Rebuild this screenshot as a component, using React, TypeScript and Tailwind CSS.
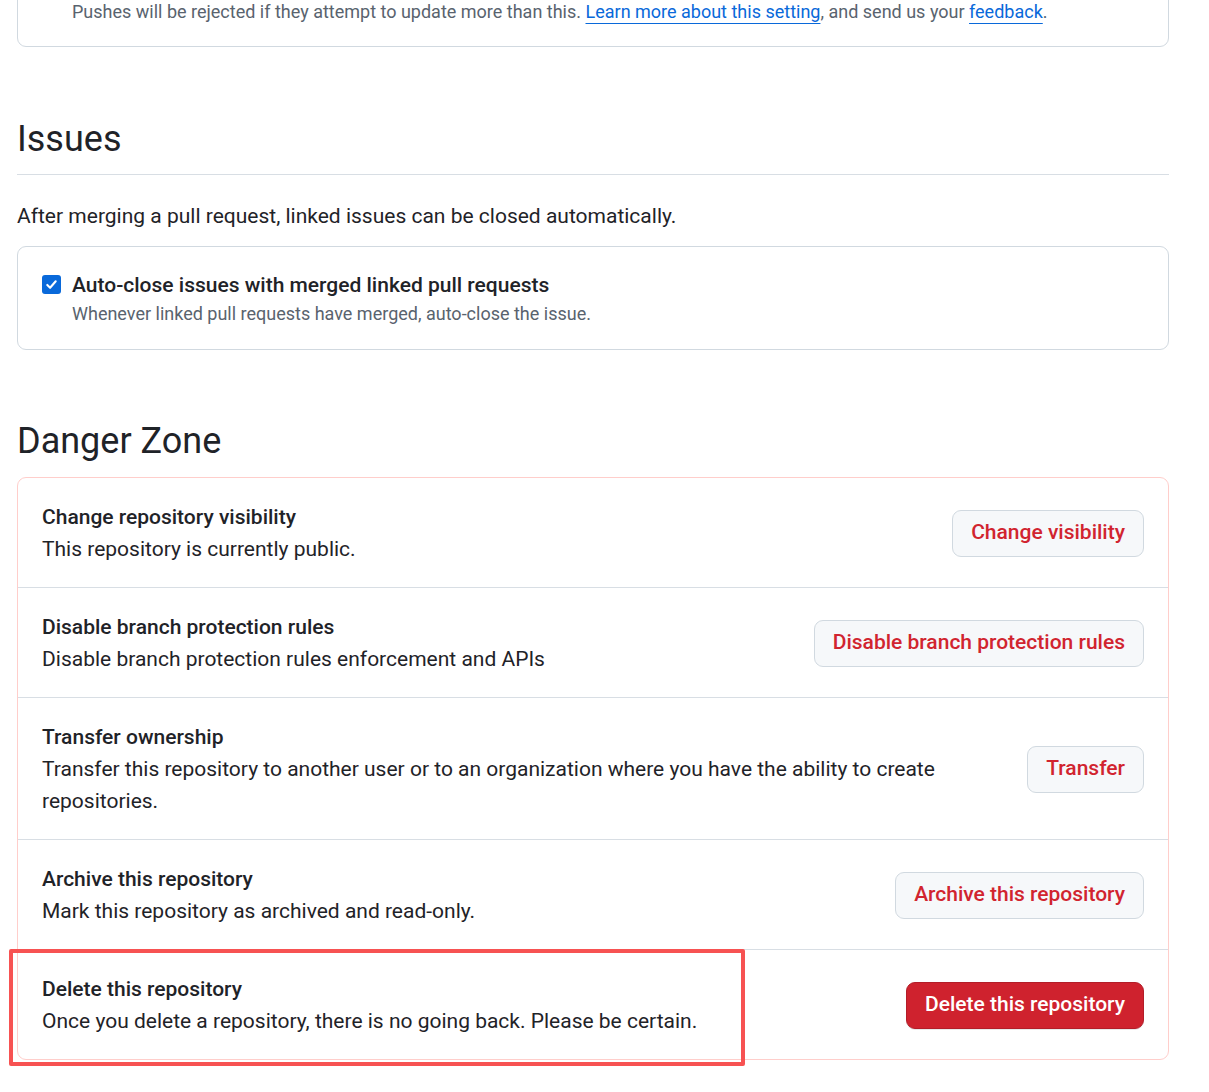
import React from "react";

type Row = { title: string; desc: string; action: string; primary?: boolean };

const rows: Row[] = [
  { title: "Change repository visibility", desc: "This repository is currently public.", action: "Change visibility" },
  { title: "Disable branch protection rules", desc: "Disable branch protection rules enforcement and APIs", action: "Disable branch protection rules" },
  {
    title: "Transfer ownership",
    desc: "Transfer this repository to another user or to an organization where you have the ability to create repositories.",
    action: "Transfer",
  },
  { title: "Archive this repository", desc: "Mark this repository as archived and read-only.", action: "Archive this repository" },
  { title: "Delete this repository", desc: "Once you delete a repository, there is no going back. Please be certain.", action: "Delete this repository", primary: true },
];

export default function App() {
  return (
    <div className="relative w-[1209px] h-[1092px] overflow-hidden bg-white text-[#1f2328] font-['Roboto',sans-serif]">
      <div className="ml-[17px] w-[1152px]">
        {/* top box (cut off) */}
        <div className="-mt-[40px] rounded-[9px] border border-[#d1d9e0] pt-[37px] pb-[21px] pl-[54px] text-[18px] leading-[27px] text-[#59636e]">
          Pushes will be rejected if they attempt to update more than this.{" "}
          <a className="text-[#0969da] underline underline-offset-[5px] decoration-1">Learn more about this setting</a>, and send us your{" "}
          <a className="text-[#0969da] underline underline-offset-[5px] decoration-1">feedback</a>.
        </div>

        {/* Issues */}
        <h2 className="mt-[65px] border-b border-[#d8dee4] pb-[8px] text-[36px] leading-[54px] font-normal">Issues</h2>
        <p className="mt-[26px] text-[21px] leading-[31.5px]">After merging a pull request, linked issues can be closed automatically.</p>
        <div className="mt-[13px] rounded-[9px] border border-[#d1d9e0] px-[24px] pt-[24px] pb-[22px]">
          <div className="flex items-start gap-[11px]">
            <span className="mt-[4px] flex h-[19px] w-[19px] shrink-0 items-center justify-center rounded-[3px] bg-[#0969da]">
              <svg viewBox="0 0 16 16" className="h-[15px] w-[15px]" fill="none">
                <path d="M3.5 8.5l3 3 6-7" stroke="white" strokeWidth="2.2" strokeLinecap="round" strokeLinejoin="round" />
              </svg>
            </span>
            <div>
              <div className="text-[21px] leading-[29px] font-medium">Auto-close issues with merged linked pull requests</div>
              <div className="text-[18px] leading-[27px] text-[#59636e]">Whenever linked pull requests have merged, auto-close the issue.</div>
            </div>
          </div>
        </div>

        {/* Danger Zone */}
        <h2 className="mt-[64px] text-[36px] leading-[54px] font-normal">Danger Zone</h2>
        <div className="mt-[9px] rounded-[9px] border border-[#ffcecb]">
          {rows.map((r, i) => (
            <div
              key={r.title}
              className={`flex items-center gap-[24px] px-[24px] pt-[24px] pb-[22px] ${i > 0 ? "border-t border-[#d8dee4]" : ""}`}
            >
              <div className="flex-1 min-w-0">
                <div className="text-[21px] leading-[31px] font-medium">{r.title}</div>
                <div className="text-[21px] leading-[32px]">{r.desc}</div>
              </div>
              {r.primary ? (
                <button className="h-[47px] shrink-0 rounded-[9px] border border-[#b31d28] bg-[#cf222e] px-[18px] text-[21px] font-medium text-white shadow-[0_1px_0_rgba(31,35,40,0.1)]">
                  {r.action}
                </button>
              ) : (
                <button className="h-[47px] shrink-0 rounded-[9px] border border-[#d1d9e0] bg-[#f6f8fa] px-[18px] text-[21px] font-medium text-[#d1242f]">
                  {r.action}
                </button>
              )}
            </div>
          ))}
        </div>
      </div>

      {/* annotation highlight */}
      <div className="absolute left-[9px] top-[949px] h-[117px] w-[736px] rounded-[2px] border-[4px] border-[#f75252]" />
    </div>
  );
}
